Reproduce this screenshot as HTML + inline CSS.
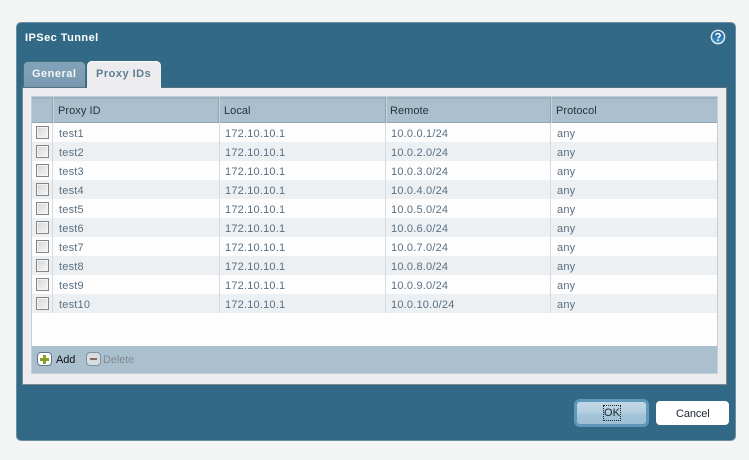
<!DOCTYPE html>
<html><head><meta charset="utf-8">
<style>
html,body{margin:0;padding:0;width:749px;height:460px;overflow:hidden;background:#f3f5f5;font-family:"Liberation Sans",sans-serif;font-size:11px}
.a{position:absolute;box-sizing:border-box}
.t{position:absolute;white-space:nowrap;line-height:14px}
.r{position:absolute;left:32px;width:685px;height:19px}
.v{position:absolute;top:97px;width:1px;height:216px;background:#d5dbe0}
.hv{position:absolute;top:97px;width:2px;height:26px;background:linear-gradient(90deg,#8fa5b5 50%,#c6d4de 50%)}
.c{position:absolute;left:36px;width:13px;height:13px;box-sizing:border-box;border:1px solid #858585;background:linear-gradient(135deg,#d6d6d6,#f6f6f6);box-shadow:inset 0 0 0 1px #f4f4f4}
.g{color:#5a6f80;letter-spacing:.2px;margin-top:1px}
.h{color:#26333d;letter-spacing:.05px;margin-top:1px}
</style></head><body>
<div class="a" style="left:16px;top:22px;width:720px;height:419px;background:#316986;border-radius:5px;border:1px solid #6c8ea1"></div>
<div class="t" style="left:25px;top:31px;color:#fff;font-weight:bold;letter-spacing:.45px">IPSec Tunnel</div>
<svg class="a" style="left:710px;top:29px" width="16" height="16" viewBox="0 0 16 16"><defs><linearGradient id="q" x1="0" y1="0" x2="0" y2="1"><stop offset="0" stop-color="#1c5c96"/><stop offset="1" stop-color="#3f93c4"/></linearGradient></defs><circle cx="8" cy="8" r="6.6" fill="url(#q)" stroke="#dbe7ee" stroke-width="1.5"/><path d="M5.8 6.3C6 4.9 7 4.5 8 4.5c1.3 0 2.2.8 2.2 1.8 0 1.5-2.1 1.6-2.1 3.1" fill="none" stroke="#fff" stroke-width="1.5"/><rect x="7.2" y="10.3" width="1.7" height="1.6" fill="#fff"/></svg>

<div class="a" style="left:23px;top:61px;width:63px;height:27px;background:linear-gradient(#82a4ba,#7798ae);border:1px solid #4d6d80;border-bottom:0;border-radius:5px 5px 0 0"></div>
<div class="t" style="left:32px;top:67px;color:#f2f6f8;font-weight:bold;letter-spacing:.5px">General</div>
<div class="a" style="left:22px;top:87px;width:705px;height:298px;background:#ececee;border:1px solid #7d8a91;border-top:1px solid #58707e"></div>
<div class="a" style="left:87px;top:61px;width:74px;height:27px;background:#ececee;border-radius:5px 5px 0 0;box-shadow:inset 0 1px 0 #fff"></div>
<div class="t" style="left:96px;top:67px;color:#5d7d93;font-weight:bold;letter-spacing:.5px">Proxy IDs</div>

<div class="a" style="left:31px;top:96px;width:687px;height:278px;background:#fdfdfe;border:1px solid #c3ced6"></div>
<div class="a" style="left:32px;top:97px;width:685px;height:26px;background:linear-gradient(#95acbb 0,#a9bfcd 3px,#abc0ce 100%);border-bottom:1px solid #8fa7b7"></div>
<div class="r" style="top:142px;background:#edf0f3"></div>
<div class="r" style="top:180px;background:#edf0f3"></div>
<div class="r" style="top:218px;background:#edf0f3"></div>
<div class="r" style="top:256px;background:#edf0f3"></div>
<div class="r" style="top:294px;background:#edf0f3"></div>
<div class="v" style="left:52px"></div><div class="v" style="left:219px"></div><div class="v" style="left:385px"></div><div class="v" style="left:550px"></div>
<div class="hv" style="left:52px"></div><div class="hv" style="left:218px"></div><div class="hv" style="left:385px"></div><div class="hv" style="left:550px"></div>
<div class="t h" style="left:58px;top:103px">Proxy ID</div><div class="t h" style="left:224px;top:103px">Local</div><div class="t h" style="left:390px;top:103px">Remote</div><div class="t h" style="left:556px;top:103px">Protocol</div>

<div class="c" style="top:126px"></div><div class="t g" style="left:59px;top:126px">test1</div><div class="t g" style="left:225px;top:126px">172.10.10.1</div><div class="t g" style="left:391px;top:126px">10.0.0.1/24</div><div class="t g" style="left:557px;top:126px">any</div>
<div class="c" style="top:145px"></div><div class="t g" style="left:59px;top:145px">test2</div><div class="t g" style="left:225px;top:145px">172.10.10.1</div><div class="t g" style="left:391px;top:145px">10.0.2.0/24</div><div class="t g" style="left:557px;top:145px">any</div>
<div class="c" style="top:164px"></div><div class="t g" style="left:59px;top:164px">test3</div><div class="t g" style="left:225px;top:164px">172.10.10.1</div><div class="t g" style="left:391px;top:164px">10.0.3.0/24</div><div class="t g" style="left:557px;top:164px">any</div>
<div class="c" style="top:183px"></div><div class="t g" style="left:59px;top:183px">test4</div><div class="t g" style="left:225px;top:183px">172.10.10.1</div><div class="t g" style="left:391px;top:183px">10.0.4.0/24</div><div class="t g" style="left:557px;top:183px">any</div>
<div class="c" style="top:202px"></div><div class="t g" style="left:59px;top:202px">test5</div><div class="t g" style="left:225px;top:202px">172.10.10.1</div><div class="t g" style="left:391px;top:202px">10.0.5.0/24</div><div class="t g" style="left:557px;top:202px">any</div>
<div class="c" style="top:221px"></div><div class="t g" style="left:59px;top:221px">test6</div><div class="t g" style="left:225px;top:221px">172.10.10.1</div><div class="t g" style="left:391px;top:221px">10.0.6.0/24</div><div class="t g" style="left:557px;top:221px">any</div>
<div class="c" style="top:240px"></div><div class="t g" style="left:59px;top:240px">test7</div><div class="t g" style="left:225px;top:240px">172.10.10.1</div><div class="t g" style="left:391px;top:240px">10.0.7.0/24</div><div class="t g" style="left:557px;top:240px">any</div>
<div class="c" style="top:259px"></div><div class="t g" style="left:59px;top:259px">test8</div><div class="t g" style="left:225px;top:259px">172.10.10.1</div><div class="t g" style="left:391px;top:259px">10.0.8.0/24</div><div class="t g" style="left:557px;top:259px">any</div>
<div class="c" style="top:278px"></div><div class="t g" style="left:59px;top:278px">test9</div><div class="t g" style="left:225px;top:278px">172.10.10.1</div><div class="t g" style="left:391px;top:278px">10.0.9.0/24</div><div class="t g" style="left:557px;top:278px">any</div>
<div class="c" style="top:297px"></div><div class="t g" style="left:59px;top:297px">test10</div><div class="t g" style="left:225px;top:297px">172.10.10.1</div><div class="t g" style="left:391px;top:297px">10.0.10.0/24</div><div class="t g" style="left:557px;top:297px">any</div>

<div class="a" style="left:32px;top:346px;width:685px;height:27px;background:#abc0ce"></div>
<div class="a" style="left:37px;top:352px;width:15px;height:14px;background:#fff;border:1px solid #5e7585;border-radius:4px"></div>
<div class="a" style="left:40px;top:358px;width:9px;height:3px;background:#86a026"></div>
<div class="a" style="left:43px;top:355px;width:3px;height:9px;background:#86a026"></div>
<div class="t" style="left:56px;top:353px;color:#0c1014;letter-spacing:-.1px">Add</div>
<div class="a" style="left:86px;top:352px;width:15px;height:14px;background:#d8dde1;border:1px solid #7f929f;border-radius:4px"></div>
<div class="a" style="left:90px;top:358px;width:7px;height:2px;background:#8a6a60"></div>
<div class="t" style="left:103px;top:353px;color:#7f8b94;letter-spacing:-.1px">Delete</div>

<div class="a" style="left:574px;top:399px;width:75px;height:28px;border-radius:6px;background:linear-gradient(#c2d8e6,#b4cfe0 45%,#a2c3d8 60%,#9ebfd4);border:3px solid #5e98ba"></div>
<div class="t" style="left:604px;top:406px;width:16px;text-align:center;color:#1a2430;outline:1px dotted #222;line-height:14px">OK</div>
<div class="a" style="left:656px;top:401px;width:73px;height:24px;border-radius:4px;background:#fff"></div>
<div class="t" style="left:676px;top:407px;color:#1a2430;letter-spacing:-.1px">Cancel</div>
</body></html>
